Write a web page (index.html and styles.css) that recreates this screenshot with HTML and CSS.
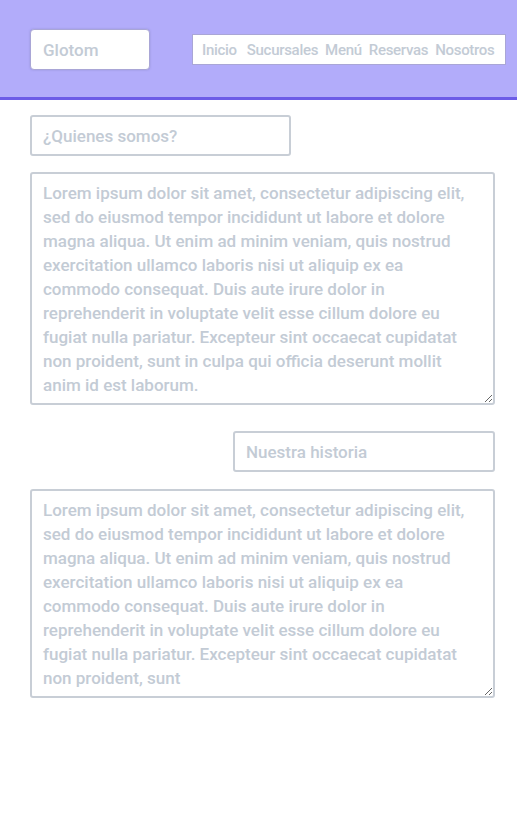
FILE: index.html
```html
<!DOCTYPE html>
<html lang="es">
<head>
<meta charset="utf-8">
<title>Glotom</title>
<link rel="stylesheet" href="styles.css">
</head>
<body>
<header class="header">
  <input class="brand" type="text" placeholder="Glotom">
  <nav class="nav">
    <span class="nav-item">Inicio</span>
    <span class="nav-item">Sucursales</span>
    <span class="nav-item">Menú</span>
    <span class="nav-item">Reservas</span>
    <span class="nav-item">Nosotros</span>
  </nav>
</header>
<main class="main">
  <input class="title title-left" type="text" placeholder="¿Quienes somos?">
  <textarea class="text text-1" placeholder="Lorem ipsum dolor sit amet, consectetur adipiscing elit, sed do eiusmod tempor incididunt ut labore et dolore magna aliqua. Ut enim ad minim veniam, quis nostrud exercitation ullamco laboris nisi ut aliquip ex ea commodo consequat. Duis aute irure dolor in reprehenderit in voluptate velit esse cillum dolore eu fugiat nulla pariatur. Excepteur sint occaecat cupidatat non proident, sunt in culpa qui officia deserunt mollit anim id est laborum."></textarea>
  <input class="title title-right" type="text" placeholder="Nuestra historia">
  <textarea class="text text-2" placeholder="Lorem ipsum dolor sit amet, consectetur adipiscing elit, sed do eiusmod tempor incididunt ut labore et dolore magna aliqua. Ut enim ad minim veniam, quis nostrud exercitation ullamco laboris nisi ut aliquip ex ea commodo consequat. Duis aute irure dolor in reprehenderit in voluptate velit esse cillum dolore eu fugiat nulla pariatur. Excepteur sint occaecat cupidatat non proident, sunt"></textarea>
</main>
</body>
</html>
```
FILE: styles.css
```css
* { box-sizing: border-box; }
body {
  margin: 0;
  background: #ffffff;
  font-family: Roboto, "Liberation Sans", sans-serif;
}
.header {
  height: 100px;
  background: #b2acfa;
  border-bottom: 3px solid #6c5ce7;
  display: flex;
  align-items: flex-start;
  padding: 29px 11px 0 30px;
  gap: 42px;
}
input, textarea {
  font-family: Roboto, "Liberation Sans", sans-serif;
  font-weight: 500;
  color: #c3cbd5;
  outline: none;
}
input::placeholder, textarea::placeholder {
  color: #c3cbd5;
  opacity: 1;
}
.brand {
  width: 120px;
  height: 41px;
  background: #fff;
  border: 1px solid #a9a6d6;
  border-radius: 4px;
  box-shadow: 0 0 2px rgba(120, 115, 180, 0.5);
  padding: 0 12px;
  font-size: 17px;
}
.nav {
  margin-top: 5px;
  height: 31px;
  flex: 1;
  background: #fff;
  border: 1px solid #a9a6d6;
  display: flex;
  align-items: center;
  padding: 0 9px;
  gap: 7px;
}
.nav-item {
  font-size: 15px;
  font-weight: 500;
  color: #c3cbd5;
  letter-spacing: -0.3px;
}
.nav-item:first-child { margin-right: 3px; }
.main {
  display: flex;
  flex-direction: column;
  padding: 15px 22px 0 30px;
}
.title {
  height: 41px;
  border: 2px solid #c8ced6;
  border-radius: 3px;
  padding: 0 11px;
  font-size: 17px;
  background: #fff;
}
.title-left { width: 261px; }
.title-right { width: 262px; align-self: flex-end; margin-top: 26px; }
.text {
  margin-top: 16px;
  width: 465px;
  border: 2px solid #c8ced6;
  border-radius: 3px;
  padding: 7px 11px 3px;
  font-size: 17px;
  line-height: 24px;
  background: #fff;
}
.text-1 { height: 233px; }
.text-2 { height: 209px; margin-top: 17px; }
```
